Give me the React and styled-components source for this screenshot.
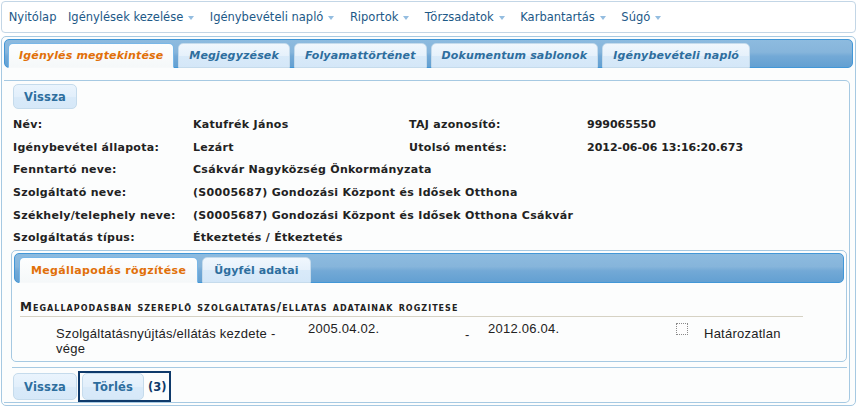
import React from 'react';
import styled, { createGlobalStyle } from 'styled-components';

const GlobalStyle = createGlobalStyle`
  html, body {
    margin: 0;
    padding: 0;
    background: #fff;
  }
  body {
    font-family: "DejaVu Sans", Verdana, sans-serif;
    color: #222;
  }
`;

const Page = styled.div`
  width: 857px;
  height: 408px;
  box-sizing: border-box;
  padding: 1px;
  display: flex;
  flex-direction: column;
  gap: 3px;
  overflow: hidden;
`;

const MenuBar = styled.nav`
  height: 32px;
  box-sizing: border-box;
  border: 1px solid #c3d6e6;
  border-radius: 4px;
  background: #fff;
  display: flex;
  align-items: center;
  padding: 0 1px;
`;

const MenuItem = styled.span`
  display: flex;
  align-items: center;
  padding: 0 5.75px;
  font-size: 11.5px;
  color: #1d5987;
  white-space: nowrap;
`;

const Caret = styled.span`
  width: 0;
  height: 0;
  margin: 1px 4px 0 5px;
  border-left: 3.5px solid transparent;
  border-right: 3.5px solid transparent;
  border-top: 4px solid #94bde0;
`;

const Widget = styled.div`
  height: ${p => p.$height}px;
  box-sizing: border-box;
  border: 1px solid #a6c9e2;
  border-radius: 5px;
  padding: 2px;
  background: #fcfdfd;
  display: flex;
  flex-direction: column;
`;

const TabNav = styled.div`
  height: ${p => p.$height}px;
  flex-shrink: 0;
  box-sizing: border-box;
  border: 1px solid #4297d7;
  border-radius: 5px;
  background: linear-gradient(#8dbbdf 0%, #86b5db 45%, #73a9d6 60%, #63a0d2 100%);
  display: flex;
  align-items: flex-end;
  gap: ${p => p.$gap}px;
  padding: 0 ${p => p.$pad}px;
`;

const Tab = styled.div`
  position: relative;
  height: ${p => p.$height}px;
  box-sizing: border-box;
  margin-bottom: -1px;
  padding: 0 ${p => p.$pad}px;
  display: flex;
  align-items: center;
  border: 1px solid ${p => (p.$active ? '#79b7e7' : '#c5dbec')};
  border-bottom-color: ${p => (p.$active ? '#f7f9fa' : '#c5dbec')};
  border-radius: 5px 5px 0 0;
  background: ${p =>
    p.$active
      ? 'linear-gradient(#fdfefe, #f5f8f9)'
      : 'linear-gradient(#f0f7fd 0%, #e6f1fb 50%, #d9eaf9 51%, #d4e7f8 100%)'};
  color: ${p => (p.$active ? '#e17009' : '#2e6e9e')};
  font-size: 11px;
  font-weight: bold;
  font-style: ${p => (p.$italic ? 'italic' : 'normal')};
  letter-spacing: ${p => p.$spacing}px;
  white-space: nowrap;
`;

const Frame = styled.div`
  flex: 1;
  margin: 12px 3px 0 0;
  border: 1px solid #a6c9e2;
  border-left: 0;
  border-radius: 0 5px 5px 0;
  padding: 3px 2px 1px 7px;
  display: flex;
  flex-direction: column;
`;

const Button = styled.button`
  height: ${p => p.$height}px;
  box-sizing: border-box;
  padding: 0 10px;
  border: 1px solid #c5dbec;
  border-radius: 5px;
  background: linear-gradient(#eaf4fd 0%, #e2effb 50%, #d9eaf9 51%, #d6e8f8 100%);
  color: #2e6e9e;
  font-family: "DejaVu Sans", Verdana, sans-serif;
  font-size: 11.5px;
  font-weight: bold;
  letter-spacing: 0.2px;
  cursor: pointer;
`;

const TopBar = styled.div`
  display: flex;
  padding-left: 2px;
`;

const Fields = styled.div`
  margin: 4px 0 0 2px;
  display: grid;
  grid-template-columns: 180px 216px 178px 1fr;
  grid-auto-rows: 22.7px;
  align-items: center;
  font-size: 11px;
  font-weight: bold;
  letter-spacing: 0.3px;
  color: #222;
  white-space: nowrap;
`;

const Value = styled.span`
  grid-column: ${p => (p.$wide ? '2 / span 3' : 'auto')};
  letter-spacing: ${p => (p.$digits ? '0' : 'inherit')};
`;

const SubWidget = styled(Widget)`
  margin-top: 1px;
  flex-shrink: 0;
`;

const SubPanel = styled.div`
  flex: 1;
  padding: 16px 6px 0 6px;
  overflow: hidden;
`;

const Heading = styled.div`
  width: 783px;
  line-height: 16px;
  padding-bottom: 1px;
  border-bottom: 1px solid #d6d2c4;
  font-size: 12px;
  font-weight: bold;
  font-variant: small-caps;
  letter-spacing: 1.03px;
  color: #222;
  white-space: nowrap;
`;

const DataRow = styled.div`
  display: grid;
  grid-template-columns: 36px 252px 157px 23px 188px 28px auto;
  align-items: start;
  font-family: "Liberation Sans", Arial, sans-serif;
  font-size: 13px;
  letter-spacing: 0.25px;
  line-height: 15px;
  color: #222;
`;

const Cell = styled.div`
  grid-column: ${p => p.$col};
  margin-top: ${p => p.$top}px;
  padding-right: ${p => p.$padRight || 0}px;
  white-space: ${p => (p.$wrap ? 'normal' : 'nowrap')};
`;

const CheckBox = styled.span`
  display: block;
  grid-column: 6;
  margin-top: 6px;
  width: 12px;
  height: 12px;
  box-sizing: border-box;
  border: 1px dotted #8a8a8a;
  background: #fdfdfd;
`;

const Separator = styled.div`
  height: 1px;
  margin: 5px 0 0 1px;
  background: #a6c9e2;
`;

const BottomBar = styled.div`
  display: flex;
  align-items: center;
  margin-top: 5px;
  padding-left: 2px;
`;

const FocusGroup = styled.span`
  display: flex;
  align-items: center;
  margin-left: 3px;
  padding: 0 2px;
  outline: 2px solid #0f3a6b;
`;

const Count = styled.span`
  margin-left: 4px;
  font-size: 11.5px;
  font-weight: bold;
  color: #0f3a6b;
`;

const menu = [
  { label: 'Nyitólap' },
  { label: 'Igénylések kezelése', drop: true },
  { label: 'Igénybevételi napló', drop: true },
  { label: 'Riportok', drop: true },
  { label: 'Törzsadatok', drop: true },
  { label: 'Karbantartás', drop: true },
  { label: 'Súgó', drop: true },
];

const mainTabs = [
  'Igénylés megtekintése',
  'Megjegyzések',
  'Folyamattörténet',
  'Dokumentum sablonok',
  'Igénybevételi napló',
];

const subTabs = ['Megállapodás rögzítése', 'Ügyfél adatai'];

export default function App() {
  return (
    <>
      <GlobalStyle />
      <Page>
        <MenuBar>
          {menu.map(item => (
            <MenuItem key={item.label}>
              {item.label}
              {item.drop && <Caret />}
            </MenuItem>
          ))}
        </MenuBar>

        <Widget $height={370}>
          <TabNav $height={29} $gap={4} $pad={3}>
            {mainTabs.map((t, i) => (
              <Tab key={t} $active={i === 0} $italic $height={25} $pad={10} $spacing={0.15}>
                {t}
              </Tab>
            ))}
          </TabNav>

          <Frame>
            <TopBar>
              <Button $height={25}>Vissza</Button>
            </TopBar>

            <Fields>
              <span>Név:</span>
              <span>Katufrék János</span>
              <span>TAJ azonosító:</span>
              <Value $digits>999065550</Value>

              <span>Igénybevétel állapota:</span>
              <span>Lezárt</span>
              <span>Utolsó mentés:</span>
              <Value $digits>2012-06-06 13:16:20.673</Value>

              <span>Fenntartó neve:</span>
              <Value $wide>Csákvár Nagyközség Önkormányzata</Value>

              <span>Szolgáltató neve:</span>
              <Value $wide>(S0005687) Gondozási Központ és Idősek Otthona</Value>

              <span>Székhely/telephely neve:</span>
              <Value $wide>(S0005687) Gondozási Központ és Idősek Otthona Csákvár</Value>

              <span>Szolgáltatás típus:</span>
              <Value $wide>Étkeztetés / Étkeztetés</Value>
            </Fields>

            <SubWidget $height={112}>
              <TabNav $height={30} $gap={4} $pad={4}>
                {subTabs.map((t, i) => (
                  <Tab key={t} $active={i === 0} $height={26} $pad={11} $spacing={i === 0 ? 0.35 : 0.1}>
                    {t}
                  </Tab>
                ))}
              </TabNav>
              <SubPanel>
                <Heading>Megallapodasban szereplő szolgaltatas/ellatas adatainak rogzitese</Heading>
                <DataRow>
                  <Cell $col={2} $top={9} $padRight={20} $wrap>
                    Szolgáltatásnyújtás/ellátás kezdete - vége
                  </Cell>
                  <Cell $col={3} $top={4}>2005.04.02.</Cell>
                  <Cell $col={4} $top={10}>-</Cell>
                  <Cell $col={5} $top={4}>2012.06.04.</Cell>
                  <CheckBox />
                  <Cell $col={7} $top={9}>Határozatlan</Cell>
                </DataRow>
              </SubPanel>
            </SubWidget>

            <Separator />

            <BottomBar>
              <Button $height={27}>Vissza</Button>
              <FocusGroup>
                <Button $height={27}>Törlés</Button>
                <Count>(3)</Count>
              </FocusGroup>
            </BottomBar>
          </Frame>
        </Widget>
      </Page>
    </>
  );
}
